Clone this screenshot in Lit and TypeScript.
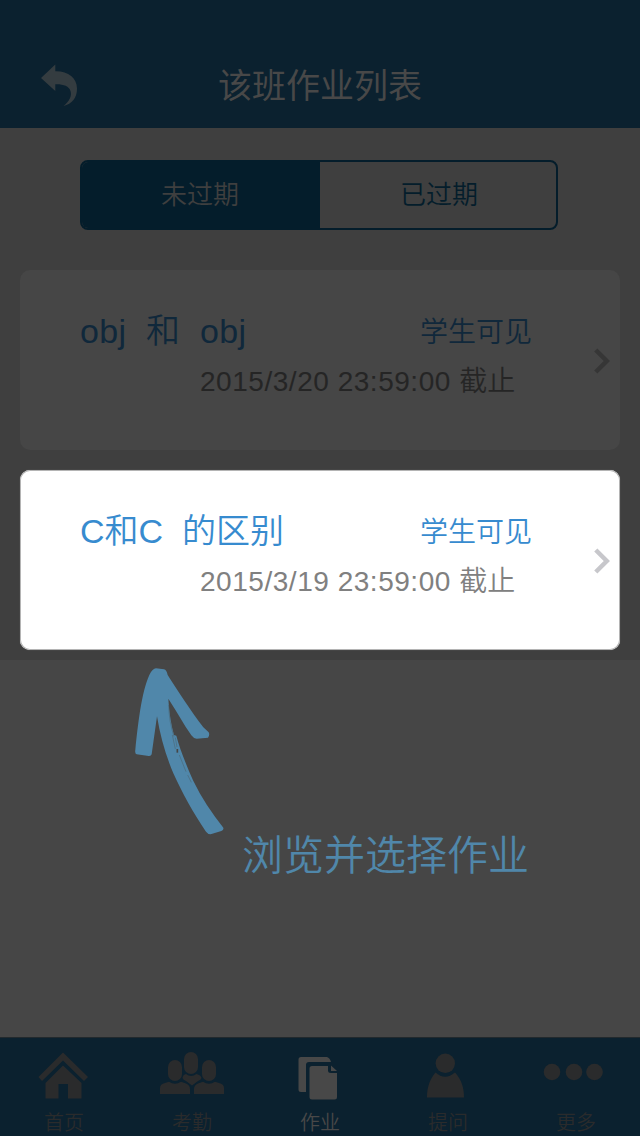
import { LitElement, html, css, svg } from "lit";
import { customElement, property } from "lit/decorators.js";
import { classMap } from "lit/directives/class-map.js";

const icons: Record<string, unknown> = {
  home: svg`<path d="M63 1052.5 L88 1077 L84 1081 L63 1060.5 L42 1081 L38.500 1077 Z"/><path d="M63 1065.500 L81.500 1083 V1098.500 H68 V1084 H58.500 V1098.500 H45.500 V1083 Z"/>`,
  group: svg`<rect x="184" y="1052" width="14" height="22" rx="7"/><rect x="168" y="1060" width="14" height="21" rx="7"/><rect x="202" y="1060" width="14" height="21" rx="7"/><path d="M182.500 1078 Q183 1074.500 186 1074 Q191 1078 196.500 1074 Q201 1075 201.500 1078 Q201 1080 198 1081 L192 1085.500 L186 1081 Q183 1080 182.500 1078Z"/><path d="M160 1094 V1088 Q160 1084 165 1083 L169 1081.800 Q175 1085.500 181 1081.800 L186 1083.500 Q190 1085 190 1089 V1094Z M194 1094 V1089 Q194 1085 198 1083.500 L203 1081.800 Q209 1085.500 215 1081.800 L219 1083 Q224 1084 224 1088 V1094Z"/>`,
  docs: svg`<path d="M301 1057 H327 Q330 1058 331 1062 H309 Q306 1062 306 1065 V1092 H301 Q298.500 1092 298.500 1089.500 V1059.500 Q298.500 1057 301 1057Z"/><path d="M312 1066 H328 V1070.500 Q328 1073 331 1073 H337 V1097 Q337 1099.500 334.500 1099.500 H312 Q309.500 1099.500 309.500 1097 V1068.500 Q309.500 1066 312 1066Z M331 1065.500 L337 1071 H331Z"/>`,
  person: svg`<circle cx="445.300" cy="1063.300" r="9.700"/><path d="M435.500 1072.500 Q445 1081 455 1072.500 C461 1079 464 1087 464 1097.500 H427 C427 1087 430 1079 435.500 1072.500Z"/>`,
  more: svg`<circle cx="552" cy="1072" r="8.300"/><circle cx="574" cy="1072" r="8.300"/><circle cx="594.500" cy="1072" r="8.300"/>`,
};

@customElement("nav-header")
class NavHeader extends LitElement {
  static styles = css`
    :host {
      display: grid;
      grid-template-columns: 120px 1fr 120px;
      align-items: center;
      height: 88px;
      padding-top: 40px;
      background: #0b212f;
      color: #484848;
    }
    .back { display: block; margin-left: 40px; fill: #343c40; }
    .title {
      padding-top: 3px;
      text-align: center;
      font-size: 34px;
      line-height: 50px;
      font-weight: 400;
    }
  `;
  render() {
    return html`
      <svg class="back" width="38" height="44" viewBox="40 62 38 44">
        <path d="M41 78 L55.300 64.500 V71.300 C68 71 77 78 77 88.500 C77 98 72 104 63.500 106 C69.500 101 72 96 70.500 91 C69 86 63 84 55.300 84.300 V91 Z" />
      </svg>
      <div class="title">该班作业列表</div>
    `;
  }
}

@customElement("segmented-control")
class SegmentedControl extends LitElement {
  static styles = css`
    :host {
      display: flex;
      box-sizing: border-box;
      width: 478px;
      height: 70px;
      border: 2px solid #041d2b;
      border-radius: 8px;
      overflow: hidden;
      color: #041d2b;
      font-size: 26px;
      font-weight: 350;
      line-height: 66px;
      text-align: center;
    }
    .segment { flex: 1; padding-left: 2px; }
    .active { flex: 0 0 236px; padding: 0 2px 0 0; background: #041d2b; color: #3f3f3f; }
  `;
  render() {
    return html`<div class="segment active">未过期</div><div class="segment">已过期</div>`;
  }
}

@customElement("homework-card")
class HomeworkCard extends LitElement {
  @property() heading = "";
  @property() deadline = "";
  @property({ type: Boolean, reflect: true }) highlighted = false;
  static styles = css`
    :host {
      display: grid;
      grid-template-columns: 1fr 16px;
      align-items: center;
      box-sizing: border-box;
      height: 180px;
      padding: 0 10px 0 60px;
      border-radius: 10px;
      background: #464646;
      color: #252525;
      --accent: #10283b;
      --chevron: #363636;
    }
    :host([highlighted]) {
      background: #fff;
      color: #808080;
      box-shadow: inset 0 0 0 1px #b4b4b4, 0 0 1px #888;
      --accent: #378bcf;
      --chevron: #c7c7cb;
    }
    .content { height: 180px; }
    .top {
      display: grid;
      grid-template-columns: 340px 1fr;
      height: 50px;
      padding-top: 36px;
      color: var(--accent);
      line-height: 50px;
      white-space: pre;
    }
    .heading { font-size: 34px; font-weight: 350; }
    .wide { letter-spacing: 0.35px; }
    .visible { padding-top: 2px; font-size: 28px; font-weight: 350; }
    .date {
      padding: 1px 0 0 120px;
      font-size: 28px;
      font-weight: 350;
      line-height: 50px;
      white-space: pre;
    }
    .digits { letter-spacing: 0.53px; }
    .chevron { margin-top: 2px; fill: none; stroke: var(--chevron); stroke-width: 4.5; }
  `;
  render() {
    return html`
      <div class="content">
        <div class="top">
          <span class=${classMap({ heading: true, wide: !this.highlighted })}>${this.heading}</span>
          <span class="visible">学生可见</span>
        </div>
        <div class="date"><span class="digits">${this.deadline} </span>截止</div>
      </div>
      <svg class="chevron" width="16" height="26" viewBox="0 0 16 26"><path d="M1.800 2 L12.800 13 L1.800 24" /></svg>
    `;
  }
}

@customElement("tab-bar")
class TabBar extends LitElement {
  static styles = css`
    :host {
      display: grid;
      grid-template-columns: repeat(5, 128px);
      box-sizing: border-box;
      height: 99px;
      border-top: 1px solid #22292d;
      background: #0b212f;
    }
    .tab { color: #2a2b2c; text-align: center; }
    .active { color: #484848; }
    .icon { display: block; fill: currentColor; }
    .label { display: block; height: 28px; overflow: hidden; font-size: 20px; font-weight: 350; line-height: 30px; }
  `;
  render() {
    const tabs = [
      ["home", "首页"],
      ["group", "考勤"],
      ["docs", "作业"],
      ["person", "提问"],
      ["more", "更多"],
    ];
    return tabs.map(
      ([name, label], i) => html`
        <div class=${classMap({ tab: true, active: name === "docs" })}>
          <svg class="icon" width="128" height="70" viewBox="${i * 128} 1038 128 70">${icons[name]}</svg>
          <span class="label">${label}</span>
        </div>
      `
    );
  }
}

@customElement("app-root")
class AppRoot extends LitElement {
  static styles = css`
    :host {
      display: flex;
      flex-direction: column;
      position: relative;
      width: 640px;
      height: 1136px;
      overflow: hidden;
      background: #464646;
      font-family: "Liberation Sans", "Noto Sans CJK SC", sans-serif;
    }
    .list {
      display: flex;
      flex-direction: column;
      gap: 20px;
      padding: 32px 20px 10px;
      background: #3f3f3f;
    }
    .filter { margin: 0 60px 20px; }
    .blank { flex: 1; }
    .arrow { position: absolute; left: 120px; top: 655px; fill: #5087aa; }
    .scratch { fill: none; stroke: #4b6674; stroke-width: 1.8; }
    .nick { fill: none; stroke: #464646; stroke-width: 5; }
    .hint {
      position: absolute;
      left: 242px;
      top: 826px;
      color: #5087aa;
      font-size: 41px;
      font-weight: 350;
      line-height: 60px;
      white-space: nowrap;
    }
  `;
  render() {
    return html`
      <nav-header></nav-header>
      <div class="list">
        <segmented-control class="filter"></segmented-control>
        <homework-card heading="obj  和  obj" deadline="2015/3/20 23:59:00"></homework-card>
        <homework-card highlighted heading="C和C  的区别" deadline="2015/3/19 23:59:00"></homework-card>
      </div>
      <div class="blank"></div>
      <tab-bar></tab-bar>
      <svg class="arrow" width="120" height="190" viewBox="0 0 360 570">
        <path d="M88 60 Q98 40 108 40 L132 43 Q140 45 143 60 C170 102 215 172 250 217 L266 232 Q270 240 264 248 L230 251 Q221 251 214 241 C190 207 168 165 145 131 C147 170 153 208 162 240 L169 242 C178 278 198 328 219 376 C244 428 275 475 310 518 Q312 524 304 528 L272 538 Q264 538 258 530 C220 475 185 410 160 355 C137 300 121 245 111 184 C106 222 100 260 95 298 Q93 304 86 303 L50 298 Q44 296 46 284 C54 210 64 112 88 60 Z" />
        <path class="scratch" d="M146 150 C147 185 152 215 162 245 M157 240 L166 282 M171 276 L166 248 M178 300 L198 350 M203 360 L214 382" />
        <path class="nick" d="M172 282 V293" />
      </svg>
      <div class="hint">浏览并选择作业</div>
    `;
  }
}
